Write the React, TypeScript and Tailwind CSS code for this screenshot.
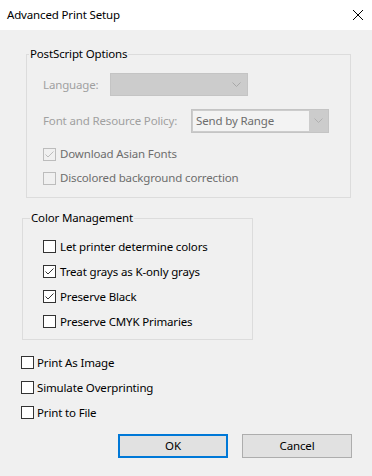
import React from "react";

const font = { fontFamily: '"Noto Sans", "Open Sans", Arial, sans-serif' };

function Box({ checked, disabled }: { checked?: boolean; disabled?: boolean }) {
  const stroke = disabled ? "#bcbcbc" : "#333333";
  return (
    <div
      className={`w-[13px] h-[13px] shrink-0 border ${
        disabled ? "border-[#bcbcbc] bg-[#f0f0f0]" : "border-[#333333] bg-white"
      } flex items-center justify-center`}
    >
      {checked && (
        <svg width="11" height="11" viewBox="0 0 11 11">
          <polyline points="1.5,5.5 4,8 9.5,2.5" fill="none" stroke={stroke} strokeWidth="1" />
        </svg>
      )}
    </div>
  );
}

function Row({
  label,
  checked,
  disabled,
  gap = "gap-[4px]",
}: {
  label: string;
  checked?: boolean;
  disabled?: boolean;
  gap?: string;
}) {
  return (
    <div className={`h-[25px] flex items-center ${gap}`}>
      <Box checked={checked} disabled={disabled} />
      <span className={disabled ? "text-[#6d6d6d]" : "text-black"}>{label}</span>
    </div>
  );
}

function Chevron({ color }: { color: string }) {
  return (
    <svg width="9" height="6" viewBox="0 0 9 6">
      <polyline points="0.5,0.5 4.5,4.5 8.5,0.5" fill="none" stroke={color} strokeWidth="1" />
    </svg>
  );
}

export default function App() {
  return (
    <div
      className="w-[372px] h-[476px] bg-[#f0f0f0] text-[11.5px] tracking-[-0.15px] leading-[16px] text-black flex flex-col"
      style={font}
    >
      <div className="h-[30px] bg-white flex items-center justify-between pl-[7px] pr-[9px] shrink-0">
        <span>Advanced Print Setup</span>
        <svg width="10" height="10" viewBox="0 0 10 10">
          <line x1="0" y1="0" x2="10" y2="10" stroke="#000" strokeWidth="1" />
          <line x1="10" y1="0" x2="0" y2="10" stroke="#000" strokeWidth="1" />
        </svg>
      </div>

      <fieldset className="ml-[26px] mt-[16px] w-[325px] h-[152px] border border-[#dcdcdc] p-0 m-0 min-w-0">
        <legend className="ml-[2px] px-[1px]">PostScript Options</legend>
        <div className="pl-[16px] pt-[11px] flex flex-col">
          <div className="h-[23px] flex items-center">
            <span className="w-[67px] text-[#a0a0a0]">Language:</span>
            <div className="w-[138px] h-[23px] bg-[#cccccc] border border-[#c4c4c4] flex items-center justify-end pr-[6px]">
              <Chevron color="#a8a8a8" />
            </div>
          </div>
          <div className="h-[24px] mt-[13px] flex items-center">
            <span className="w-[148px] text-[#a0a0a0]">Font and Resource Policy:</span>
            <div className="w-[138px] h-[24px] bg-[#cccccc] border border-[#c4c4c4] flex items-center p-[1px]">
              <div className="w-[116px] h-[20px] bg-[#f3f3f3] flex items-center pl-[3px] text-[#6d6d6d]">
                Send by Range
              </div>
              <div className="flex-1 flex items-center justify-center">
                <Chevron color="#b0b0b0" />
              </div>
            </div>
          </div>
          <div className="mt-[9px] flex flex-col">
            <div className="h-[24px] flex items-center gap-[4px]">
              <Box checked disabled />
              <span className="text-[#6d6d6d]">Download Asian Fonts</span>
            </div>
            <div className="h-[24px] flex items-center gap-[4px]">
              <Box disabled />
              <span className="text-[#6d6d6d]">Discolored background correction</span>
            </div>
          </div>
        </div>
      </fieldset>

      <fieldset className="ml-[22px] mt-[12px] w-[231px] h-[130px] border border-[#dcdcdc] p-0 m-0 min-w-0">
        <legend className="ml-[7px] px-[1px]">Color Management</legend>
        <div className="pl-[20px] pt-[8px] flex flex-col">
          <Row label="Let printer determine colors" />
          <Row label="Treat grays as K-only grays" checked />
          <Row label="Preserve Black" checked />
          <Row label="Preserve CMYK Primaries" />
        </div>
      </fieldset>

      <div className="ml-[21px] mt-[10px] flex flex-col">
        <Row label="Print As Image" gap="gap-[3px]" />
        <Row label="Simulate Overprinting" gap="gap-[3px]" />
        <Row label="Print to File" gap="gap-[3px]" />
      </div>

      <div className="mt-[9px] ml-[118px] flex gap-[14px]">
        <button className="w-[110px] h-[24px] bg-[#e1e1e1] border-2 border-[#0078d7] flex items-center justify-center">
          OK
        </button>
        <button className="w-[110px] h-[24px] bg-[#e1e1e1] border border-[#adadad] flex items-center justify-center">
          Cancel
        </button>
      </div>
    </div>
  );
}
